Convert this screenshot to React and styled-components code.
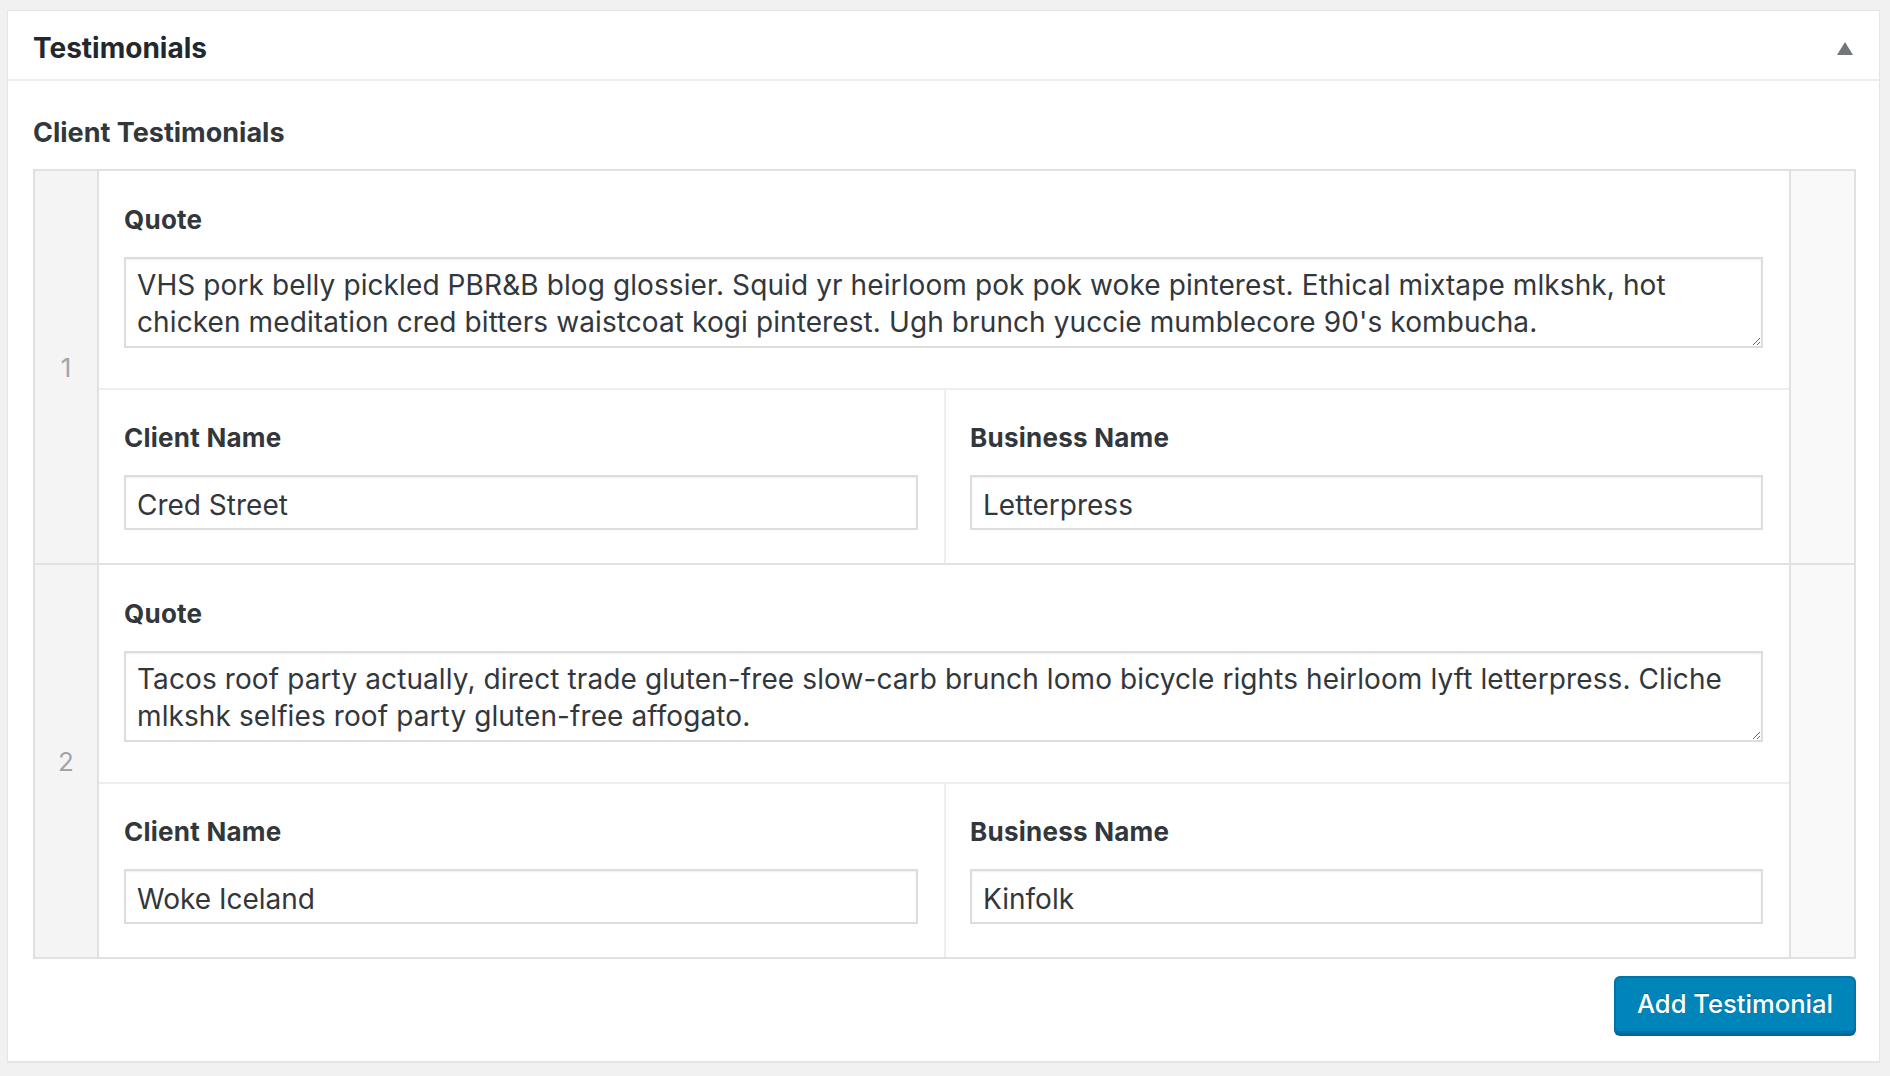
import styled, { createGlobalStyle } from "styled-components";

const GlobalStyle = createGlobalStyle`
  body {
    margin: 0;
    background: #f1f1f1;
    font-family: Inter, "Liberation Sans", sans-serif;
    color: #32373c;
  }
`;

const Page = styled.div`
  padding: 10px 10px 14px 7px;
`;

const Panel = styled.div`
  background: #ffffff;
  border: 1px solid #e5e5e5;
  box-shadow: 0 1px 1px rgba(0, 0, 0, 0.04);
`;

const Header = styled.div`
  height: 70px;
  padding: 6px 26px 0 25px;
  box-sizing: border-box;

  display: flex;
  align-items: center;
  justify-content: space-between;

  border-bottom: 2px solid #eeeeee;
`;

const Title = styled.h2`
  margin: 0;
  font-size: 28px;
  font-weight: 700;
  color: #23282d;
`;

const Body = styled.div`
  padding: 0 23px 28px 25px;
`;

const Subtitle = styled.h3`
  margin: 35px 0 19px;
  font-size: 27px;
  line-height: 34px;
  font-weight: 700;
  color: #32373c;
`;

const Table = styled.div`
  border: 2px solid #e1e1e1;
`;

const Row = styled.div`
  display: flex;
  border-top: ${(p) => (p.$first ? "none" : "2px solid #e1e1e1")};
`;

const NumberCell = styled.div`
  width: 62px;
  flex-shrink: 0;

  display: flex;
  align-items: center;
  justify-content: center;

  background: #f4f4f4;
  border-right: 2px solid #e1e1e1;

  font-size: 26px;
  color: #a0a5aa;
`;

const HandleCell = styled.div`
  width: 63px;
  flex-shrink: 0;
  background: #f9f9f9;
  border-left: 2px solid #e1e1e1;
`;

const Content = styled.div`
  flex: 1;
  min-width: 0;
`;

const QuoteSection = styled.div`
  padding: 33px 26px 40px 25px;
  border-bottom: 2px solid #eeeeee;
`;

const FieldGrid = styled.div`
  display: grid;
  grid-template-columns: 1fr 1fr;
`;

const Field = styled.div`
  padding: 32px 26px 33px ${(p) => (p.$right ? "24px" : "25px")};
  border-left: ${(p) => (p.$right ? "2px solid #eeeeee" : "none")};
`;

const Label = styled.label`
  display: block;
  margin-bottom: 21px;
  font-size: 26px;
  line-height: 32px;
  letter-spacing: 0.25px;
  font-weight: 700;
  color: #32373c;
`;

const TextArea = styled.textarea`
  display: block;
  width: 100%;
  height: 91px;
  box-sizing: border-box;
  margin: 0;
  padding: 8px 11px 6px;

  border: 2px solid #dddddd;
  box-shadow: inset 0 1px 2px rgba(0, 0, 0, 0.07);
  resize: vertical;

  font-family: Inter, "Liberation Sans", sans-serif;
  font-size: 28px;
  line-height: 37px;
  letter-spacing: 0.1px;
  color: #32373c;
`;

const TextInput = styled.input`
  display: block;
  width: 100%;
  height: 55px;
  box-sizing: border-box;
  margin: 0;
  padding: 5px 11px 0;

  border: 2px solid #dddddd;
  box-shadow: inset 0 1px 2px rgba(0, 0, 0, 0.07);

  font-family: Inter, "Liberation Sans", sans-serif;
  font-size: 28px;
  color: #32373c;
`;

const Footer = styled.div`
  display: flex;
  justify-content: flex-end;
  margin-top: 17px;
`;

const Button = styled.button`
  height: 57px;
  padding: 0 21px 2px;

  background: #0085ba;
  border: 2px solid #0073aa;
  border-radius: 6px;
  box-shadow: 0 3px 0 #006799;

  font-family: Inter, "Liberation Sans", sans-serif;
  font-size: 25.6px;
  font-weight: 500;
  color: #ffffff;
  text-shadow: 0 -1px 1px #006799;

  cursor: pointer;
`;

const testimonials = [
  {
    quote:
      "VHS pork belly pickled PBR&B blog glossier. Squid yr heirloom pok pok woke pinterest. Ethical mixtape mlkshk, hot chicken meditation cred bitters waistcoat kogi pinterest. Ugh brunch yuccie mumblecore 90's kombucha.",
    client: "Cred Street",
    business: "Letterpress",
  },
  {
    quote:
      "Tacos roof party actually, direct trade gluten-free slow-carb brunch lomo bicycle rights heirloom lyft letterpress. Cliche mlkshk selfies roof party gluten-free affogato.",
    client: "Woke Iceland",
    business: "Kinfolk",
  },
];

export default function App() {
  return (
    <>
      <GlobalStyle />
      <Page>
        <Panel>
          <Header>
            <Title>Testimonials</Title>
            <svg width="16" height="13" viewBox="0 0 16 13">
              <polygon points="8,0 16,13 0,13" fill="#72777c" />
            </svg>
          </Header>
          <Body>
            <Subtitle>Client Testimonials</Subtitle>
            <Table>
              {testimonials.map((t, i) => (
                <Row key={i} $first={i === 0}>
                  <NumberCell>{i + 1}</NumberCell>
                  <Content>
                    <QuoteSection>
                      <Label>Quote</Label>
                      <TextArea defaultValue={t.quote} />
                    </QuoteSection>
                    <FieldGrid>
                      <Field>
                        <Label>Client Name</Label>
                        <TextInput defaultValue={t.client} />
                      </Field>
                      <Field $right>
                        <Label>Business Name</Label>
                        <TextInput defaultValue={t.business} />
                      </Field>
                    </FieldGrid>
                  </Content>
                  <HandleCell />
                </Row>
              ))}
            </Table>
            <Footer>
              <Button>Add Testimonial</Button>
            </Footer>
          </Body>
        </Panel>
      </Page>
    </>
  );
}
